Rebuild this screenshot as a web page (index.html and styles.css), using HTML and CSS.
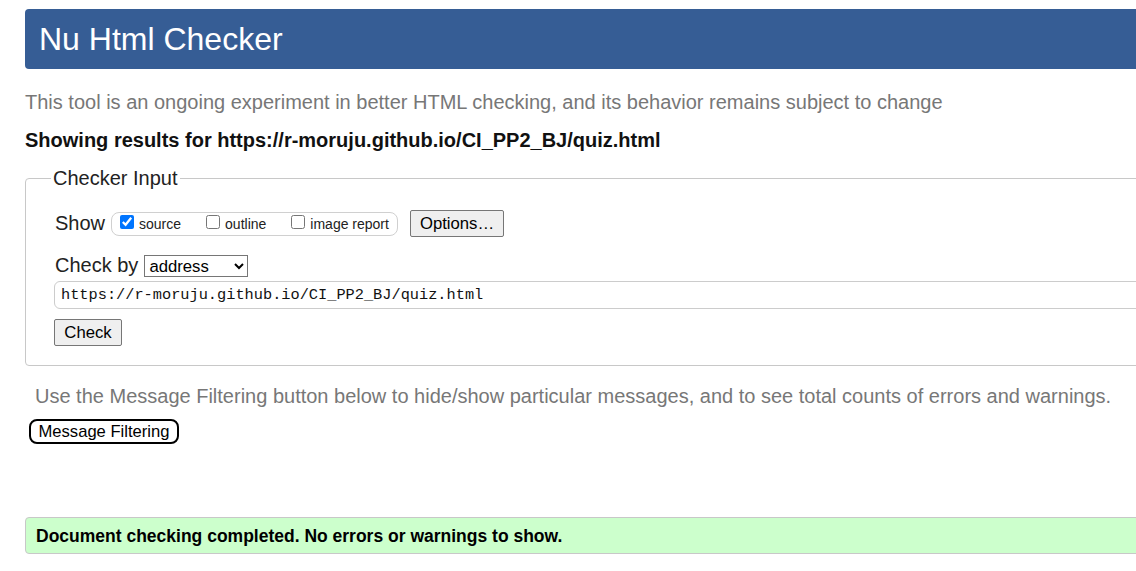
FILE: index.html
```html
<!DOCTYPE html>
<html lang="en">
<head>
<meta charset="utf-8">
<title>Nu Html Checker</title>
<link rel="stylesheet" href="styles.css">
</head>
<body>
<div class="page">
  <h1 class="header">Nu Html Checker</h1>
  <p class="intro">This tool is an ongoing experiment in better HTML checking, and its behavior remains subject to change</p>
  <p class="results">Showing results for https://r-moruju.github.io/CI_PP2_BJ/quiz.html</p>
  <fieldset class="checker">
    <legend class="legend">Checker Input</legend>
    <div class="row show-row">
      <span class="label">Show</span>
      <span class="opts">
        <label class="opt"><input type="checkbox" checked> source</label>
        <label class="opt"><input type="checkbox"> outline</label>
        <label class="opt"><input type="checkbox"> image report</label>
      </span>
      <button class="btn options">Options…</button>
    </div>
    <div class="row by-row">
      <span class="label">Check by</span>
      <select class="sel"><option>address</option></select>
    </div>
    <input class="url" type="text" value="https://r-moruju.github.io/CI_PP2_BJ/quiz.html">
    <button class="btn check">Check</button>
  </fieldset>
  <p class="filter-note">Use the Message Filtering button below to hide/show particular messages, and to see total counts of errors and warnings.</p>
  <button class="filter-btn">Message Filtering</button>
  <div class="success">Document checking completed. No errors or warnings to show.</div>
</div>
</body>
</html>
```

FILE: styles.css
```css
html { overflow: hidden; }
body {
  margin: 0;
  font-family: "Liberation Sans", Arial, sans-serif;
  background: #fff;
  color: #000;
}
.page {
  width: 1180px;
  padding: 9px 0 0 25px;
}
.header {
  margin: 0;
  height: 60px;
  box-sizing: border-box;
  padding: 12px 0 0 14px;
  background: #365d95;
  color: #fff;
  font-weight: normal;
  font-size: 32px;
  line-height: 36px;
  border-radius: 4px;
}
.intro {
  margin: 21px 0 0 0;
  color: #777;
  font-size: 20px;
  line-height: 24px;
}
.results {
  margin: 14px 0 0 0;
  font-weight: bold;
  font-size: 20px;
  line-height: 24px;
  color: #111;
}
.checker {
  margin: 15px 0 0 0;
  border: 1px solid #c8c8c8;
  border-radius: 4px;
  padding: 4px 0 19px 29px;
}
.legend {
  font-size: 20px;
  padding: 0 2px;
  margin-left: -4px;
  color: #222;
}
.row {
  display: flex;
  align-items: center;
}
.label {
  font-size: 20px;
  color: #222;
}
.show-row { margin-top: 16px; }
.opts {
  margin-left: 6px;
  display: flex;
  align-items: center;
  height: 24px;
  box-sizing: border-box;
  width: 287px;
  border: 1px solid #d0d0d0;
  border-radius: 8px;
  padding: 0 0 0 8px;
}
.opt {
  font-size: 14px;
  color: #222;
  display: flex;
  align-items: center;
  margin-right: 25px;
}
.opt:last-child { margin-right: 0; }
.opt input {
  margin: 0 5px 4px 0;
  width: 14px;
  height: 14px;
}
.btn {
  font-family: "Liberation Sans", Arial, sans-serif;
  font-size: 16.7px;
  background: #efefef;
  border: 1px solid #767676;
  border-radius: 2px;
  color: #000;
  padding: 0 8px;
}
.options {
  margin-left: 12px;
  height: 27px;
  width: 94px;
}
.by-row { margin-top: 17px; }
.sel {
  margin-left: 6px;
  width: 104px;
  height: 22px;
  font-family: "Liberation Sans", Arial, sans-serif;
  font-size: 16.7px;
  border: 1px solid #767676;
  border-radius: 0;
  background: #fff;
  color: #000;
}
.url {
  display: block;
  margin: 4px 0 0 -1px;
  width: 1120px;
  height: 28px;
  box-sizing: border-box;
  border: 1px solid #ccc;
  border-radius: 6px;
  padding: 0 6px;
  font-family: "Liberation Mono", "DejaVu Sans Mono", monospace;
  font-size: 15.3px;
  color: #111;
}
.check {
  display: block;
  margin: 10px 0 0 -1px;
  height: 27px;
  width: 68px;
}
.filter-note {
  margin: 18px 0 0 10px;
  color: #777;
  font-size: 20px;
  line-height: 24px;
}
.filter-btn {
  display: block;
  margin: 11px 0 0 4px;
  height: 25px;
  width: 150px;
  padding: 0;
  background: #fff;
  border: 2px solid #000;
  border-radius: 8px;
  font-family: "Liberation Sans", Arial, sans-serif;
  font-size: 16.6px;
  color: #000;
}
.success {
  margin-top: 73px;
  height: 37px;
  box-sizing: border-box;
  background: #ccffcc;
  border: 1px solid #c8c8c8;
  border-radius: 4px;
  padding: 8px 0 0 10px;
  font-weight: bold;
  font-size: 17.5px;
  color: #000;
}
```
